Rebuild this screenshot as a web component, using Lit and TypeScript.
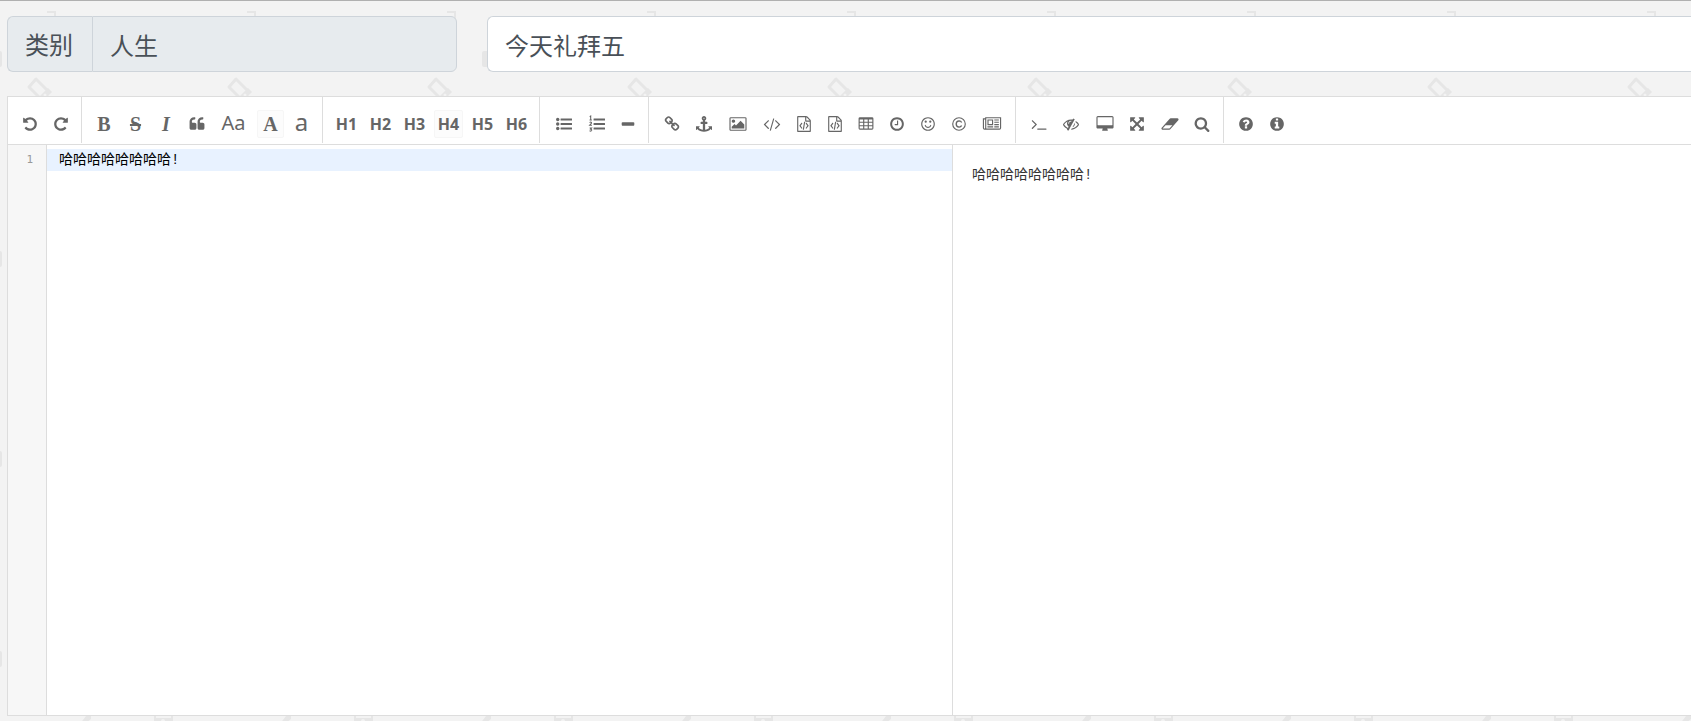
import { LitElement, html, css, svg } from "lit";
import { customElement, property, state } from "lit/decorators.js";

const disc =
  "q0 209-103 385.5t-279.5 279.5-385.5 103-385.5-103-279.5-279.5-103-385.5 103-385.5 279.5-279.5 385.5-103 385.5 103 279.5 279.5 103 385.5z";

const paths: Record<string, string> = {
  undo: "M1664 896q0 156-61 298t-164 245-245 164-298 61q-172 0-327-72.5t-264-204.5q-7-10-6.5-22.5t8.5-20.5l137-138q10-9 25-9 16 2 23 12 73 95 179 147t225 52q104 0 198.5-40.5t163.5-109.5 109.5-163.5 40.5-198.5-40.5-198.5-109.5-163.5-163.5-109.5-198.5-40.5q-98 0-188 35.5t-160 101.5l137 138q31 30 14 69-17 40-59 40h-448q-26 0-45-19t-19-45v-448q0-42 40-59 39-17 69 14l130 129q107-101 244.5-156.5t284.5-55.5q156 0 298 61t245 164 164 245 61 298z",
  redo: "M1664 256v448q0 26-19 45t-45 19h-448q-42 0-59-40-17-39 14-69l138-138q-148-137-349-137-104 0-198.5 40.5t-163.5 109.5-109.5 163.5-40.5 198.5 40.5 198.5 109.5 163.5 163.5 109.5 198.5 40.5q119 0 225-52t179-147q7-10 23-12 15 0 25 9l137 138q9 8 9.5 20.5t-7.5 22.5q-109 132-264 204.5t-327 72.5q-156 0-298-61t-245-164-164-245-61-298 61-298 164-245 245-164 298-61q147 0 284.5 55.5t244.5 156.5l130-129q29-31 70-14 39 17 39 59z",
  quote: "M832 960v384q0 80-56 136t-136 56h-384q-80 0-136-56t-56-136v-704q0-104 40.5-198.5t109.5-163.5 163.5-109.5 198.5-40.5h64q26 0 45 19t19 45v128q0 26-19 45t-45 19h-64q-106 0-181 75t-75 181v32q0 40 28 68t68 28h224q80 0 136 56t56 136zm896 0v384q0 80-56 136t-136 56h-384q-80 0-136-56t-56-136v-704q0-104 40.5-198.5t109.5-163.5 163.5-109.5 198.5-40.5h64q26 0 45 19t19 45v128q0 26-19 45t-45 19h-64q-106 0-181 75t-75 181v32q0 40 28 68t68 28h224q80 0 136 56t56 136z",
  minus: "M1600 800v192q0 40-28 68t-68 28h-1216q-40 0-68-28t-28-68v-192q0-40 28-68t68-28h1216q40 0 68 28t28 68z",
  link: "M1520 1216q0-40-28-68l-208-208q-28-28-68-28-42 0-72 32 3 3 19 18.5t21.5 21.5 15 19 13 25.5 3.5 27.5q0 40-28 68t-68 28q-15 0-27.5-3.5t-25.5-13-19-15-21.5-21.5-18.5-19q-33 31-33 73 0 40 28 68l206 207q27 27 68 27 40 0 68-26l147-146q28-28 28-67zm-703-705q0-40-28-68l-206-207q-28-28-68-28-39 0-68 27l-147 146q-28 28-28 67 0 40 28 68l208 208q27 27 68 27 42 0 72-31-3-3-19-18.5t-21.5-21.5-15-19-13-25.5-3.5-27.5q0-40 28-68t68-28q15 0 27.5 3.5t25.5 13 19 15 21.5 21.5 18.5 19q33-31 33-73zm895 705q0 120-85 203l-147 146q-83 83-203 83-121 0-204-85l-206-207q-83-83-83-203 0-123 88-209l-88-88q-86 88-208 88-120 0-204-84l-208-208q-84-84-84-204t85-203l147-146q83-83 203-83 121 0 204 85l206 207q83 83 83 203 0 123-88 209l88 88q86-88 208-88 120 0 204 84l208 208q84 84 84 204z",
  anchor: "M960 256q0-26-19-45t-45-19-45 19-19 45 19 45 45 19 45-19 19-45zm832 928v352q0 22-20 30-8 2-12 2-12 0-23-9l-93-93q-119 143-318.5 226.5t-429.5 83.5-429.5-83.5-318.5-226.5l-93 93q-9 9-23 9-4 0-12-2-20-8-20-30v-352q0-14 9-23t23-9h352q22 0 30 20 8 19-7 35l-100 100q67 91 189.5 153.5t271.5 82.5v-647h-192q-26 0-45-19t-19-45v-128q0-26 19-45t45-19h192v-163q-58-34-93-92.5t-35-128.5q0-106 75-181t181-75 181 75 75 181q0 70-35 128.5t-93 92.5v163h192q26 0 45 19t19 45v128q0 26-19 45t-45 19h-192v647q149-20 271.5-82.5t189.5-153.5l-100-100q-15-16-7-35 8-20 30-20h352q14 0 23 9t9 23z",
  image: "M576 576q0 80-56 136t-136 56-136-56-56-136 56-136 136-56 136 56 56 136zm1024 384v448h-1408v-192l320-320 160 160 512-512zm96-704h-1600q-13 0-22.5 9.5t-9.5 22.5v1216q0 13 9.5 22.5t22.5 9.5h1600q13 0 22.5-9.5t9.5-22.5v-1216q0-13-9.5-22.5t-22.5-9.5zm160 32v1216q0 66-47 113t-113 47h-1600q-66 0-113-47t-47-113v-1216q0-66 47-113t113-47h1600q66 0 113 47t47 113z",
  code: "M553 1399l-50 50q-10 10-23 10t-23-10l-466-466q-10-10-10-23t10-23l466-466q10-10 23-10t23 10l50 50q10 10 10 23t-10 23l-393 393 393 393q10 10 10 23t-10 23zm591-1067l-373 1291q-4 13-15.5 19.5t-23.5 2.5l-62-17q-13-4-19.5-15.5t-2.5-24.5l373-1291q4-13 15.5-19.5t23.5-2.5l62 17q13 4 19.5 15.5t2.5 24.5zm657 651l-466 466q-10 10-23 10t-23-10l-50-50q-10-10-10-23t10-23l393-393-393-393q-10-10-10-23t10-23l50-50q10-10 23-10t23 10l466 466q10 10 10 23t-10 23z",
  file: "M1596 380q28 28 48 76t20 88v1152q0 40-28 68t-68 28h-1344q-40 0-68-28t-28-68v-1600q0-40 28-68t68-28h896q40 0 88 20t76 48zm-444-244v376h376q-10-29-22-41l-313-313q-12-12-41-22zm384 1528v-1024h-416q-40 0-68-28t-28-68v-416h-768v1536h1280zm-928-896q8-11 21-12.5t24 6.5l51 38q11 8 12.5 21t-6.5 24l-182 243 182 243q8 11 6.5 24t-12.5 21l-51 38q-11 8-24 6.5t-21-12.5l-226-301q-14-19 0-38zm802 301q14 19 0 38l-226 301q-8 11-21 12.5t-24-6.5l-51-38q-11-8-12.5-21t6.5-24l182-243-182-243q-8-11-6.5-24t12.5-21l51-38q11-8 24-6.5t21 12.5zm-620 461q-13-2-20.5-13t-5.5-24l138-831q2-13 13-20.5t24-5.5l63 10q13 2 20.5 13t5.5 24l-138 831q-2 13-13 20.5t-24 5.5z",
  clock: "M1024 544v448q0 14-9 23t-23 9h-320q-14 0-23-9t-9-23v-64q0-14 9-23t23-9h224v-352q0-14 9-23t23-9h64q14 0 23 9t9 23zm416 352q0-148-73-273t-198-198-273-73-273 73-198 198-73 273 73 273 198 198 273 73 273-73 198-198 73-273zm224 0" + disc,
  smile: "M1262 1075q-37 121-138 195t-228 74-228-74-138-195q-8-25 4-48.5t38-31.5q25-8 48.5 4t31.5 38q25 80 92.5 129.5t151.5 49.5 151.5-49.5 92.5-129.5q8-26 32-38t49-4 37 31.5 4 48.5zM768 640a128 128 0 1 1-256 0 128 128 0 0 1 256 0zM1280 640a128 128 0 1 1-256 0 128 128 0 0 1 256 0zM1536 896a640 640 0 1 0-1280 0 640 640 0 0 0 1280 0zm128 0" + disc,
  terminal: "M649 983l-466 466q-10 10-23 10t-23-10l-50-50q-10-10-10-23t10-23l393-393-393-393q-10-10-10-23t10-23l50-50q10-10 23-10t23 10l466 466q10 10 10 23t-10 23zm1079 457v64q0 14-9 23t-23 9h-960q-14 0-23-9t-9-23v-64q0-14 9-23t23-9h960q14 0 23 9t9 23z",
  eye: "M555 1335l78-141q-87-63-136-159t-49-203q0-121 61-225-229 117-381 353 167 258 427 375zm389-759q0-20-14-34t-34-14q-125 0-214.5 89.5t-89.5 214.5q0 20 14 34t34 14 34-14 14-34q0-86 61-147t147-61q20 0 34-14t14-34zm363-191q0 7-1 9-106 189-316 567t-315 566l-49 89q-10 16-28 16-12 0-134-70-16-10-16-28 0-12 44-87-143-65-263.5-173t-208.5-245q-20-31-20-69t20-69q153-235 380-371t496-136q89 0 180 17l54-97q10-16 28-16 5 0 18 6t31 15.5 33 18.5 31.5 18.5 19.5 11.5q16 10 16 27zm37 447q0 139-79 253.5t-209 164.5l280-502q8 45 8 84zm448 128q0 35-20 69-39 64-109 145-150 172-347.5 267t-419.5 95l74-132q212-18 392.5-137t301.5-307q-115-179-282-294l63-112q95 64 182.5 153t144.5 184q20 34 20 69z",
  desktop: "M1728 992v-832q0-13-9.5-22.5t-22.5-9.5h-1600q-13 0-22.5 9.5t-9.5 22.5v832q0 13 9.5 22.5t22.5 9.5h1600q13 0 22.5-9.5t9.5-22.5zm128-832v1088q0 66-47 113t-113 47h-544q0 37 16 77.5t32 71 16 43.5q0 26-19 45t-45 19h-512q-26 0-45-19t-19-45q0-14 16-44t32-70 16-78h-544q-66 0-113-47t-47-113v-1088q0-66 47-113t113-47h1600q66 0 113 47t47 113z",
  arrows: "M1411 541l-355 355 355 355 144-144q29-31 70-14 39 17 39 59v448q0 26-19 45t-45 19h-448q-42 0-59-40-17-39 14-69l144-144-355-355-355 355 144 144q31 30 14 69-17 40-59 40h-448q-26 0-45-19t-19-45v-448q0-42 40-59 39-17 69 14l144 144 355-355-355-355-144 144q-19 19-45 19-12 0-24-5-40-17-40-59v-448q0-26 19-45t45-19h448q42 0 59 40 17 39-14 69l-144 144 355 355 355-355-144-144q-31-30-14-69 17-40 59-40h448q26 0 45 19t19 45v448q0 42-39 59-13 5-25 5-26 0-45-19z",
  eraser: "M832 1408l336-384h-768l-336 384h768zm1013-1077q15 34 9.5 71.5t-30.5 65.5l-896 1024q-38 44-96 44h-768q-38 0-69.5-20.5t-47.5-54.5q-15-34-9.5-71.5t30.5-65.5l896-1024q38-44 96-44h768q38 0 69.5 20.5t47.5 54.5z",
  search: "M1216 832q0-185-131.5-316.5t-316.5-131.5-316.5 131.5-131.5 316.5 131.5 316.5 316.5 131.5 316.5-131.5 131.5-316.5zm512 832q0 52-38 90t-90 38q-54 0-90-38l-343-342q-179 124-399 124-143 0-273.5-55.5t-225-150-150-225-55.5-273.5 55.5-273.5 150-225 225-150 273.5-55.5 273.5 55.5 225 150 150 225 55.5 273.5q0 220-124 399l343 343q37 37 37 90z",
  help: "M1024 1376v-192q0-14-9-23t-23-9h-192q-14 0-23 9t-9 23v192q0 14 9 23t23 9h192q14 0 23-9t9-23zm256-672q0-88-55.5-163t-138.5-116-170-41q-243 0-371 213-15 24 8 42l132 100q7 6 19 6 16 0 25-12 53-68 86-92 34-24 86-24 48 0 85.5 26t37.5 59q0 38-20 61t-68 45q-63 28-115.5 86.5t-52.5 125.5v36q0 14 9 23t23 9h192q14 0 23-9t9-23q0-19 21.5-49.5t54.5-49.5q32-18 49-28.5t46-35 44.5-48 28-60.5 12.5-81zm384 192" + disc,
  info: "M1152 1376v-160q0-14-9-23t-23-9h-96v-512q0-14-9-23t-23-9h-320q-14 0-23 9t-9 23v160q0 14 9 23t23 9h96v320h-96q-14 0-23 9t-9 23v160q0 14 9 23t23 9h448q14 0 23-9t9-23zm-128-896v-160q0-14-9-23t-23-9h-192q-14 0-23 9t-9 23v160q0 14 9 23t23 9h192q14 0 23-9t9-23zm640 416" + disc,
};

const cells = [192, 704, 1216].flatMap((x) => [384, 768, 1152].map((y) => [x, y]));

const drawings: Record<string, unknown> = {
  ul: svg`${[384, 896, 1408].map(
    (y) => svg`<circle cx="192" cy=${y} r="192"/><rect x="512" y=${y - 112} width="1280" height="224" rx="32"/>`
  )}`,
  ol: svg`${[384, 896, 1408].map((y) => svg`<rect x="512" y=${y - 112} width="1280" height="224" rx="32"/>`)}
    <path fill="none" stroke="currentColor" stroke-width="120"
      d="M80 80l110-70v400M60 450h260M70 740q110-110 200-30 50 90-60 180l-130 140h250M70 1340h220l-110 130q140 10 120 140-60 130-240 50"/>`,
  table: svg`<path fill-rule="evenodd" d=${
    "M224 128h1344q160 0 160 160v1088q0 160-160 160h-1344q-160 0-160-160v-1088q0-160 160-160z" +
    cells.map(([x, y]) => `M${x} ${y}h384v256h-384z`).join("")
  }/>`,
  copyright: svg`<g fill="none" stroke="currentColor" stroke-width="128">
    <circle cx="896" cy="896" r="704"/><path stroke-width="150" d="M1190 720q-80-170-280-170-320 20-330 346 10 330 330 346 200 0 280-170"/></g>`,
  news: svg`<path fill-rule="evenodd" transform="translate(-128 0)"
    d="M1024 512h-384v384h384zM1152 1152v128h-640v-128zM1152 384v640h-640v-640zM1792 1152v128h-512v-128zM1792 896v128h-512v-128zM1792 640v128h-512v-128zM1792 384v128h-512v-128zM256 1344v-960h-128v960q0 64 64 64t64-64zM1920 1344v-1088h-1536v1088q0 33-11 64h1483q64 0 64-64zM2048 128v1216q0 192-192 192h-1664q-192 0-192-192v-1088h256v-128z"/>`,
};

@customElement("tool-icon")
class ToolIcon extends LitElement {
  @property() name = "";

  static styles = css`
    :host { display: flex; }
    svg { display: block; width: 18px; height: 16px; fill: currentColor; overflow: visible; }
  `;

  render() {
    return html`<svg viewBox="-112 0 2016 1792" aria-hidden="true">
      ${drawings[this.name] ?? svg`<path fill-rule="evenodd" d=${paths[this.name]}/>`}
    </svg>`;
  }
}

type Tool = { title: string; width: number; icon?: string; label?: string; style?: string };
const icon = (icon: string, title: string, width = 26): Tool => ({ icon, title, width });
const text = (label: string, title: string, width: number, style: string): Tool => ({ label, title, width, style });

const groups: Tool[][] = [
  [icon("undo", "撤销"), icon("redo", "重做", 25)],
  [
    text("B", "粗体", 26, "serif"),
    text("S", "删除线", 27, "serif strike"),
    text("I", "斜体", 24, "serif italic"),
    icon("quote", "引用", 27),
    text("Aa", "将每个单词首字母转成大写", 37, "case"),
    text("A", "将所选转换成大写", 27, "serif lit"),
    text("a", "将所选转换成小写", 25, "case small"),
  ],
  [1, 2, 3, 4, 5, 6].map((n) => text(`H${n}`, `标题${n}`, 29, n === 4 ? "heading lit" : "heading")),
  [icon("ul", "无序列表", 29), icon("ol", "有序列表", 27), icon("minus", "横线", 25)],
  [
    icon("link", "链接", 27), icon("anchor", "引用链接", 28), icon("image", "添加图片", 29),
    icon("code", "行内代码", 29), icon("file", "预格式文本"), icon("file", "代码块"),
    icon("table", "添加表格"), icon("clock", "日期时间"), icon("smile", "表情"),
    icon("copyright", "HTML实体字符"), icon("news", "插入分页符", 30),
  ],
  [
    icon("terminal", "跳转到行", 27), icon("eye", "关闭实时预览", 28), icon("desktop", "全窗口预览", 29),
    icon("arrows", "全屏"), icon("eraser", "清空", 29), icon("search", "搜索"),
  ],
  [icon("help", "使用帮助"), icon("info", "关于")],
];

@customElement("editor-toolbar")
class EditorToolbar extends LitElement {
  static styles = css`
    :host {
      display: flex;
      height: 47px;
      padding-left: 9px;
      border-bottom: 1px solid #ddd;
      background: #fff;
      overflow: hidden;
    }
    .group {
      display: flex;
      flex: none;
      gap: 5px;
      padding: 13px 8px 0 9px;
      margin-bottom: 1px;
      border-right: 1px solid #ddd;
    }
    .group:first-child { padding-left: 0; }
    .group:last-child { border-right: 0; }
    button {
      display: flex;
      align-items: center;
      justify-content: center;
      flex: none;
      height: 28px;
      padding: 0;
      border: 1px solid transparent;
      border-radius: 2px;
      background: none;
      color: #666;
      cursor: pointer;
    }
    button:hover, .lit { background: #fcfcfc; border-color: #f6f6f6; }
    .serif { font: bold 20px/26px "Liberation Serif", serif; }
    .strike { text-decoration: line-through; }
    .italic { font-style: italic; }
    .case { font: 20px/24px "Noto Sans", sans-serif; align-items: flex-start; }
    .small { font-size: 24px; line-height: 22px; }
    .heading { font: bold 16px/26px "Noto Sans", sans-serif; }
  `;

  render() {
    return groups.map(
      (tools) => html`<div class="group" role="group">
        ${tools.map(
          (t) => html`<button type="button" class=${t.style ?? ""} title=${t.title} aria-label=${t.title}
            style="width:${t.width}px">${t.icon ? html`<tool-icon name=${t.icon}></tool-icon>` : t.label}</button>`
        )}
      </div>`
    );
  }
}

@customElement("app-root")
class AppRoot extends LitElement {
  @state() private source = "哈哈哈哈哈哈哈哈!";

  static styles = css`
    :host {
      display: flex;
      flex-direction: column;
      box-sizing: border-box;
      min-height: 100vh;
      padding: 15px 0 5px 7px;
      border-top: 1px solid #b0b0b0;
      background: #f3f3f3
        url("data:image/svg+xml,%3Csvg xmlns='http://www.w3.org/2000/svg' width='200' height='200'%3E%3Cg fill='none' stroke='%23e6e6e6' stroke-width='2'%3E%3Cpath d='M47 11h8v20'/%3E%3Cpath stroke-width='3' stroke-linejoin='round' d='M36 78l13 13-7 8-13-13z'/%3E%3C/g%3E%3Cg fill='%23e6e6e6'%3E%3Cpath d='M48 87l4 4-10 10-4-4z'/%3E%3Crect x='-16' y='50' width='18' height='16' rx='2'/%3E%3Crect x='82' y='50' width='20' height='16' rx='2'/%3E%3Cpath d='M86 115h5v3l-7 6h-5zM154 115h19v8h-19z'/%3E%3C/g%3E%3Cg fill='%23f3f3f3'%3E%3Ccircle cx='45' cy='94' r='1.5'/%3E%3Cpath d='M156 115h15v2h-15z'/%3E%3Ccircle cx='163' cy='120' r='2'/%3E%3C/g%3E%3C/svg%3E") 0 0;
      color: #495057;
      font-family: "Noto Sans", "Noto Sans CJK SC", sans-serif;
      overflow: hidden;
    }
    .fields {
      display: grid;
      grid-template-columns: 450px 1fr;
      gap: 30px;
      margin-bottom: 24px;
    }
    .category { display: flex; }
    label, input {
      box-sizing: border-box;
      height: 56px;
      padding: 0 17px;
      border: 1px solid #ced4da;
      background: #e7ebee;
      color: #495057;
      font: 24px/54px "Noto Sans CJK SC", sans-serif;
    }
    label { padding-right: 19px; border-radius: 6px 0 0 6px; border-right: 0; }
    input { flex: 1; min-width: 0; border-radius: 0 6px 6px 0; outline: 0; }
    .title { border-radius: 6px 0 0 6px; border-right: 0; background: #fff; }
    .editor {
      display: flex;
      flex-direction: column;
      flex: 1;
      border: 1px solid #ddd;
      border-right: 0;
      background: #fff;
    }
    .panes { display: grid; grid-template-columns: 945fr 738fr; flex: 1; }
    .code { display: flex; border-right: 1px solid #ddd; }
    .gutter {
      box-sizing: border-box;
      width: 39px;
      padding: 4px 13px 0 0;
      border-right: 1px solid #ddd;
      background: #f7f7f7;
      color: #999;
      font: 11px/22px "DejaVu Sans Mono", monospace;
      text-align: right;
    }
    textarea {
      flex: 1;
      min-width: 0;
      padding: 4px 12px;
      border: 0;
      outline: 0;
      resize: none;
      background: linear-gradient(#e8f2ff, #e8f2ff) 0 4px / 100% 22px no-repeat #fff;
      color: #000;
      font: 14px/22px "Liberation Mono", "Noto Sans CJK SC", monospace;
    }
    .preview {
      padding: 19px;
      color: #333;
      font: 14px/22px "Liberation Mono", "Noto Sans CJK SC", sans-serif;
    }
    p { margin: 0; }
  `;

  render() {
    return html`
      <div class="fields">
        <div class="category">
          <label for="category">类别</label>
          <input id="category" value="人生" readonly />
        </div>
        <input class="title" aria-label="标题" value="今天礼拜五" />
      </div>
      <div class="editor">
        <editor-toolbar></editor-toolbar>
        <div class="panes">
          <div class="code">
            <div class="gutter">1</div>
            <textarea aria-label="正文" spellcheck="false" .value=${this.source}
              @input=${(e: Event) => (this.source = (e.target as HTMLTextAreaElement).value)}></textarea>
          </div>
          <div class="preview"><p>${this.source}</p></div>
        </div>
      </div>
    `;
  }
}
